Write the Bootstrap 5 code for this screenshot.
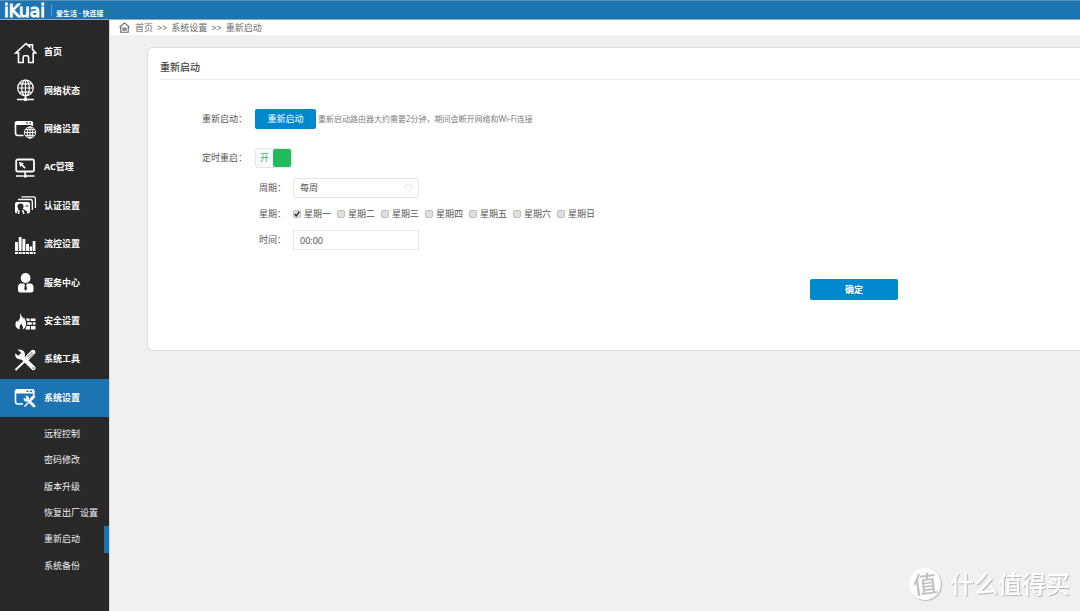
<!DOCTYPE html>
<html lang="zh-CN">
<head>
<meta charset="utf-8">
<meta name="viewport" content="width=device-width, initial-scale=1">
<title>iKuai - 重新启动</title>
<link href="https://cdn.jsdelivr.net/npm/bootstrap@5.3.0/dist/css/bootstrap.min.css" rel="stylesheet">
<style>
  :root { --ik-blue: #1c74b3; --ik-btn: #0088ce; --ik-dark: #282828; }
  body { font: 9px/14px "Noto Sans", "Noto Sans CJK SC", sans-serif; color: #555; background: #f0f0f0; }
  a { color: inherit; text-decoration: none; }
  .topbar { height: 20px; background: var(--ik-blue); border-top: 1px solid #5b8fb5; border-bottom: 1px solid #8caac0; padding-left: 4px; }
  .brand { font: 17px/20px "DejaVu Sans", sans-serif; -webkit-text-stroke: 1px #fff; }
  .slogan { font-size: 7px; font-weight: 700; line-height: 10px; margin-top: 8px; }
  .brand-line { width: 1px; height: 12px; background: #5d9cca; margin: 3px 4px 0 6px; }
  .sidebar { width: 110px; background: var(--ik-dark); border-right: 1px solid #d8d8d8; padding-top: 13px; color: #fff; }
  .menu { display: grid; grid-auto-rows: 1fr; min-height: 384px; font-weight: 700; }
  .menu a { padding-left: 14px; gap: 7px; }
  .menu svg { width: 23px; height: 23px; flex: none; fill: none; stroke: #fff; stroke-width: 1.6; }
  .menu .f { fill: #fff; stroke: none; }
  .menu .active { background: var(--ik-blue); }
  .submenu { display: grid; grid-auto-rows: 1fr; min-height: 158px; margin-top: 4px; }
  .submenu a { padding-left: 44px; color: #f2f2f2; }
  .submenu .active { border-right: 5px solid var(--ik-blue); }
  .crumbs { height: 15px; padding-left: 9px; gap: 5px; color: #6a6a6a; }
  .crumbs ol { gap: 4px; }
  .panel { margin: 12px 0 0 37px; background: #fff; border: 1px solid #dcdcdc; border-right: 0; border-radius: 6px 0 0 6px; padding: 12px 0 50px 12px; }
  .panel h1 { font-size: 10px; line-height: 14px; font-weight: 500; color: #444; border-bottom: 1px solid #ebebeb; padding-bottom: 5px; margin-bottom: 29px; }
  .fields { padding-left: 42px; }
  .f-row { min-height: 20px; }
  .f-row > .lbl { width: 53px; flex: none; }
  .lbl, .hint { font-family: "Noto Sans", "Noto Sans CJK TC", sans-serif; }
  .timer { margin-top: 19px; }
  .f-row.sub > .lbl { width: 34px; }
  .sub-fields { padding-left: 57px; gap: 6px; margin-top: 10px; }
  .ik-btn { font-size: 9px; line-height: 14px; color: #fff; background: var(--ik-btn); border-radius: 2px; border: 0; }
  .ik-btn:hover { background: #0079b8; color: #fff; }
  .restart { width: 61px; height: 20px; }
  .hint { font-size: 8px; color: #808080; margin-left: 2px; }
  .switch { width: 37px; height: 20px; border: 1px solid #e6e6e6; border-radius: 3px; background: #fafafa; color: #3dbd6b; }
  .switch input { appearance: none; width: 18px; height: 18px; margin: 0; background: #1fbb5d; border-radius: 2px; }
  .ctl { width: 126px; height: 20px; border: 1px solid #e3e6ec; background-color: #fff; color: #555; font-size: 9px; line-height: 14px; padding: 2px 6px; border-radius: 0; }
  select.ctl { appearance: none; border-radius: 3px; }
  .heart { position: absolute; right: 6px; top: 6px; width: 9px; height: 8px; fill: none; stroke: #dfe3e8; pointer-events: none; }
  .day { width: 44px; gap: 3px; }
  .day input { appearance: none; width: 8px; height: 8px; margin: 0 0 1px; border: 1px solid #bdbdbd; border-radius: 2px; background: #e0e0e0; }
  .day input:checked { background: #e4e4e4 url("data:image/svg+xml,%3Csvg xmlns='http://www.w3.org/2000/svg' viewBox='0 0 8 8'%3E%3Cpath d='M1 4l2 2.4L7 1' fill='none' stroke='%23222' stroke-width='1.8'/%3E%3C/svg%3E") center/cover; }
  .submit { margin: 29px 182px 0 0; }
  .submit .ik-btn { width: 88px; height: 21px; }
  .watermark { position: fixed; right: 10px; bottom: 10px; gap: 9px; color: #fff; font-size: 24px; font-weight: 500; line-height: 34px; text-shadow: 1px 1px 1px #b5b5b5; }
  .watermark .seal { width: 32px; height: 32px; border-radius: 50%; background: #fff; color: #c2c2c2; box-shadow: 1px 1px 1px #bbb; text-shadow: none; transform: rotate(-7deg); }
</style>
</head>
<body class="min-vh-100 d-flex flex-column">
<header class="topbar d-flex text-white">
  <a href="#" class="brand">iKuai</a><span class="brand-line"></span>
  <span class="slogan">爱生活 · 快连接</span>
</header>
<div class="d-flex flex-grow-1">
  <nav class="sidebar flex-shrink-0" aria-label="主菜单">
    <div class="menu">
      <a href="#" class="d-flex align-items-center"><svg viewBox="0 0 23 23"><path d="M4.500 12H1.800L12 2.500l3.500 3.200V3.800h3v4.600l3.300 3.600h-2.600v9.500h-4.600v-5.200q0-1.600-1.500-1.600h-2.400q-1.500 0-1.500 1.600v5.200H4.500z"/></svg>首页</a>
      <a href="#" class="d-flex align-items-center"><svg viewBox="0 0 23 23"><g stroke-width="1.200"><circle cx="11.500" cy="9" r="7.800"/><ellipse cx="11.500" cy="9" rx="3.800" ry="7.800"/><path d="M11.500 1v16M4 9h15M5.500 4.800h12M5.500 13.200h12"/></g><path d="M11.500 17v3M3 20.500h17"/><circle class="f" cx="11.500" cy="20.300" r="1.900"/></svg>网络状态</a>
      <a href="#" class="d-flex align-items-center"><svg viewBox="0 0 23 23"><path d="M9.500 18.500H4q-2.500 0-2.500-2.500V5M18.300 5v4"/><path class="f" d="M1 8V6q0-2 2-2h14q2 0 2 2v2z"/><path stroke="#282828" stroke-width="1.300" d="M12.500 5.800H14M15.500 5.800H17"/><g stroke-width="1"><circle cx="16" cy="15.500" r="5.600"/><ellipse cx="16" cy="15.500" rx="2.700" ry="5.600"/><path d="M16 10v11M10.500 15.500h11M11.500 12.700h9M11.500 18.300h9"/></g></svg>网络设置</a>
      <a href="#" class="d-flex align-items-center"><svg viewBox="0 0 23 23"><rect x="2.200" y="3.500" width="17.800" height="12" rx="1.500" stroke-width="1.800"/><path d="M11.200 15.500v4M2 20h7.500M13 20h7.500"/><circle class="f" cx="11.300" cy="20" r="1.800"/><path class="f" d="M5 6l5 1.200-1.300 1.300 3 3-1.200 1.200-3-3-1.300 1.300z"/></svg>AC管理</a>
      <a href="#" class="d-flex align-items-center"><svg viewBox="0 0 23 23"><path stroke-width="1.300" d="M7.500 2.800h12.200q1.700 0 1.700 1.700V14M4 5.500h12.500q1.800 0 1.800 1.700V16"/><path class="f" d="M3 8h11q2 0 2 2v7.500q0 2-2 2h-1v-2l-3.500-2.500-5 0-2 4.500Q1 19.500 1 17.500V10q0-2 2-2z"/><circle cx="6.500" cy="12.500" r="3" fill="#282828" stroke="none"/><path stroke-width="1.500" d="M5 16l-.5 4M8.500 16l1.500 4"/><path stroke="#282828" stroke-width="1" d="M11.500 12H14.500"/></svg>认证设置</a>
      <a href="#" class="d-flex align-items-center"><svg viewBox="0 0 23 23"><path class="f" d="M1 9h2.900v9H1zM4.700 4h2.900v14H4.700zM8.400 6h2.900v12H8.400zM12.100 11H15v7h-2.900zM15.600 13.500h2.500V18h-2.500zM18.700 8h2.700v10h-2.700z"/><path stroke-width="2" stroke-dasharray="3 .7" d="M1 20h20.500"/></svg>流控设置</a>
      <a href="#" class="d-flex align-items-center"><svg viewBox="0 0 23 23"><circle class="f" cx="11.600" cy="7" r="4.900"/><path class="f" d="M7 12.500h9q3.500 0 3.500 4V19q0 2.500-2.500 2.500H6.500Q4 21.500 4 19v-2.500q0-4 3-4z"/><path fill="#282828" stroke="none" d="M10 12.300h3.200l-.9 2 .7 3.700-1.400 1.800-1.400-1.800.7-3.700z"/></svg>服务中心</a>
      <a href="#" class="d-flex align-items-center"><svg viewBox="0 0 23 23"><path class="f" d="M6.500 4q.5 3 3 5.500l.6-1q2.400 4.500 2 7.500-.5 3-3.500 4.500 1-3-1.500-6Q5 17 5.500 20.500 1 19 1.500 14.500q.2-1.500 1.500-3l.8 1.500Q7 8.500 6.500 4z"/><path class="f" d="M12 9.500h3.500V12H13zM16.500 9.500h5V12h-5zM13.300 13.200h4.500v2.500h-4.500zM18.800 13.200h2.700v2.500h-2.700zM12.500 17H16v3.500h-4.500zM17 17h4.500v3.500H17z"/></svg>安全设置</a>
      <a href="#" class="d-flex align-items-center"><svg viewBox="0 0 23 23"><path stroke-width="2" d="M1.500 22l9-8.500"/><path stroke-width="5" stroke-linecap="round" d="M13.800 9.500l5.200-5.200"/><path stroke="#282828" stroke-width=".8" d="M13.500 9l5-5M15 10.500l5-5"/><path stroke-width="4.500" stroke-linecap="round" d="M7 8l12.300 12"/><path class="f" d="M3.500 1.800q4-1.200 6.500 1.800 1.500 2 .7 5L8 11.500Q4 12 2 9.500.600 7.500 1.200 5.200L4.500 8 7 7l.2-2.200z"/><circle cx="19.300" cy="20" r=".8" fill="#282828" stroke="none"/></svg>系统工具</a>
      <a href="#" class="d-flex align-items-center active" aria-current="true"><svg viewBox="0 0 23 23"><path d="M9 18H4q-2.500 0-2.500-2.500V5M19.700 5v4"/><path class="f" d="M1 7.500V5q0-2 2-2h15.500q2 0 2 2v2.500z"/><path stroke="#1c74b3" stroke-width="1.500" d="M12.500 5.300h2M16 5.300h2"/><path stroke-width="1.500" d="M10.500 20.500l4-4M15 16l4-4"/><path stroke-width="3" stroke-linecap="round" d="M19.800 10.500l-2.500 2.500"/><path stroke-width="2.800" stroke-linecap="round" d="M13 13l7 7"/><path class="f" d="M11 9.500q3 0 4 2l-.5 3-2 1.200q-2.700-.2-3-4l2.500 1.200 1-1z"/></svg>系统设置</a>
    </div>
    <div class="submenu">
      <a href="#" class="d-flex align-items-center">远程控制</a>
      <a href="#" class="d-flex align-items-center">密码修改</a>
      <a href="#" class="d-flex align-items-center">版本升级</a>
      <a href="#" class="d-flex align-items-center">恢复出厂设置</a>
      <a href="#" class="d-flex align-items-center active" aria-current="page">重新启动</a>
      <a href="#" class="d-flex align-items-center">系统备份</a>
    </div>
  </nav>
  <main class="flex-grow-1">
    <nav class="crumbs bg-white d-flex align-items-center" aria-label="路径">
      <svg width="11" height="11" viewBox="0 0 10 10" fill="none" stroke="#666"><path d="M.5 4.800L5 .8l4.500 4M1.600 4.500v4.800h6.800V4.500"/><path fill="#888" stroke="none" d="M3 5h4v3H3z"/></svg>
      <ol class="list-unstyled d-flex mb-0">
        <li><a href="#">首页</a></li><li>&gt;&gt;</li><li><a href="#">系统设置</a></li><li>&gt;&gt;</li><li><a href="#">重新启动</a></li>
      </ol>
    </nav>
    <section class="panel">
      <h1>重新启动</h1>
      <form class="fields">
        <div class="f-row d-flex align-items-center">
          <label class="lbl" for="restart">重新启动：</label>
          <button type="button" id="restart" class="btn ik-btn p-0 restart">重新启动</button>
          <span class="hint">重新启动路由器大约需要2分钟，期间会断开网络和Wi-Fi连接</span>
        </div>
        <div class="f-row d-flex align-items-center timer">
          <label class="lbl" for="timer">定时重启：</label>
          <span class="switch d-flex align-items-center justify-content-between"><span class="ps-1">开</span><input type="checkbox" id="timer" role="switch" checked></span>
        </div>
        <div class="sub-fields d-flex flex-column">
          <div class="f-row sub d-flex align-items-center">
            <label class="lbl" for="cycle">周期：</label>
            <div class="position-relative">
              <select id="cycle" class="ctl d-block"><option>每周</option><option>每天</option></select>
              <svg class="heart" viewBox="0 0 9 8"><path d="M4.500 7.300L1 4Q.2 1 2.500.8q1.500 0 2 .9.500-.9 2-.9Q8.800 1 8 4z"/></svg>
            </div>
          </div>
          <div class="f-row sub d-flex align-items-center">
            <span class="lbl">星期：</span>
            <label class="day d-flex align-items-center"><input type="checkbox" checked>星期一</label>
            <label class="day d-flex align-items-center"><input type="checkbox">星期二</label>
            <label class="day d-flex align-items-center"><input type="checkbox">星期三</label>
            <label class="day d-flex align-items-center"><input type="checkbox">星期四</label>
            <label class="day d-flex align-items-center"><input type="checkbox">星期五</label>
            <label class="day d-flex align-items-center"><input type="checkbox">星期六</label>
            <label class="day d-flex align-items-center"><input type="checkbox">星期日</label>
          </div>
          <div class="f-row sub d-flex align-items-center">
            <label class="lbl" for="time">时间：</label>
            <input type="text" id="time" class="ctl" value="00:00">
          </div>
        </div>
        <div class="submit d-flex justify-content-end">
          <button type="submit" class="btn ik-btn p-0 fw-bold">确定</button>
        </div>
      </form>
    </section>
  </main>
</div>
<div class="watermark d-flex align-items-center"><span class="seal d-flex align-items-center justify-content-center">值</span>什么值得买</div>
<script src="https://cdn.jsdelivr.net/npm/bootstrap@5.3.0/dist/js/bootstrap.bundle.min.js"></script>
</body>
</html>
